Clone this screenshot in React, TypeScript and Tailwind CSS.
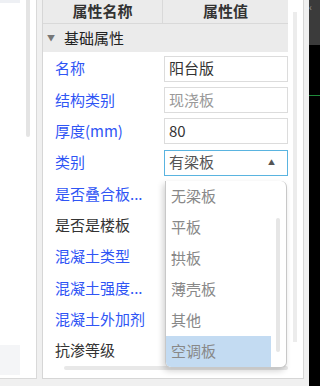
import { useState } from 'react';

interface Row {
  label: string;
  blue: boolean;
  value?: string;
  muted?: boolean;
  select?: boolean;
}

const rows: Row[] = [
  { label: '名称', blue: true, value: '阳台版' },
  { label: '结构类别', blue: true, value: '现浇板', muted: true },
  { label: '厚度(mm)', blue: true, value: '80' },
  { label: '类别', blue: true, select: true },
  { label: '是否叠合板...', blue: true },
  { label: '是否是楼板', blue: false },
  { label: '混凝土类型', blue: true },
  { label: '混凝土强度...', blue: true },
  { label: '混凝土外加剂', blue: true },
  { label: '抗渗等级', blue: false },
];

const options = ['无梁板', '平板', '拱板', '薄壳板', '其他', '空调板'];

export default function App() {
  const [selected] = useState('空调板');

  return (
    <div
      className="relative flex w-[320px] h-[386px] overflow-hidden bg-[#f0f0f0] text-[15px]"
      style={{ fontFamily: '"Noto Sans CJK SC", "Noto Sans", sans-serif' }}
    >
      {/* left side panel */}
      <div className="relative w-[37px] h-[379px] bg-white border-r border-b border-[#d9d9d9] shrink-0">
        <div className="w-[20px] h-[3px] bg-[#eef0f4]" />
        <div className="absolute left-[26px] top-0 w-[4px] h-[137px] rounded-b bg-[#e4e4e4]" />
        <div className="absolute left-0 top-[345px] w-[20px] h-[30px] bg-[#f4f5f7]" />
      </div>

      <div className="w-[5px] shrink-0" />

      {/* property panel */}
      <div className="relative w-[262px] h-[379px] bg-white border-l border-r border-b border-[#d6d6d6] shrink-0 flex">
        <div className="w-[245px] flex flex-col">
          <div className="flex h-[26px] bg-[#ebebeb] border-b border-[#d9d9d9] font-bold text-[#333]">
            <div className="w-[120px] flex items-center justify-center border-r border-[#d9d9d9]">属性名称</div>
            <div className="flex-1 flex items-center justify-center">属性值</div>
          </div>
          <div className="flex items-center h-[30px] bg-[#ebebeb] text-[#222]">
            <span className="ml-[4px] mr-[9px] text-[8px] text-[#777]">▼</span>
            基础属性
          </div>
          <div className="mt-[1px]">
            {rows.map((row) => (
              <div key={row.label} className="flex items-center h-[31.35px]">
                <div className={`w-[120px] pl-[12px] whitespace-nowrap ${row.blue ? 'text-[#2f55f5]' : 'text-[#333]'}`}>
                  {row.label}
                </div>
                {row.value !== undefined && (
                  <div
                    className={`ml-[1px] flex-1 h-[26px] flex items-center px-[4px] border border-[#dcdcdc] ${row.muted ? 'text-[#999]' : 'text-[#333]'}`}
                  >
                    {row.value}
                  </div>
                )}
                {row.select && (
                  <div className="ml-[1px] flex-1 h-[26px] flex items-center justify-between px-[4px] border border-[#5ab4e0] text-[#555]">
                    有梁板
                    <span className="mr-[8px] text-[7px] text-[#555]">▲</span>
                  </div>
                )}
              </div>
            ))}
          </div>
          <div className="mt-auto mb-[8px] ml-[21px] h-[4px] rounded-full bg-[#e8e8e8]" />
        </div>
        <div className="ml-[5px] mt-[12px] w-[4px] h-[330px] bg-[#ececec]" />

        {/* dropdown */}
        <div className="absolute left-[122px] top-[181px] w-[122px] h-[187px] bg-white border border-[#c8c8c8] border-t-0 rounded-b-[6px] rounded-tr-[6px] shadow-[-2px_3px_6px_rgba(0,0,0,0.18)] overflow-hidden">
          {options.map((opt) => (
            <div
              key={opt}
              className={`h-[31px] flex items-center pl-[5px] text-[#888] ${opt === selected ? 'bg-[#c3dbf2] w-[105px] text-[#3a6ea8]' : ''}`}
            >
              {opt}
            </div>
          ))}
          <div className="absolute left-[110px] top-[37px] w-[4px] h-[134px] rounded-full bg-[#e6e6e6]" />
        </div>
      </div>

      <div className="w-[5px] shrink-0" />

      {/* canvas edge */}
      <div className="relative flex-1 h-full bg-black">
        <div className="h-[45px] bg-[#3b3b3b] text-[#999] text-[10px] leading-none pt-[2px]">‹</div>
        <div className="absolute left-0 right-0 top-[95px] h-[1px] bg-[#1f8a3a]" />
      </div>
    </div>
  );
}
